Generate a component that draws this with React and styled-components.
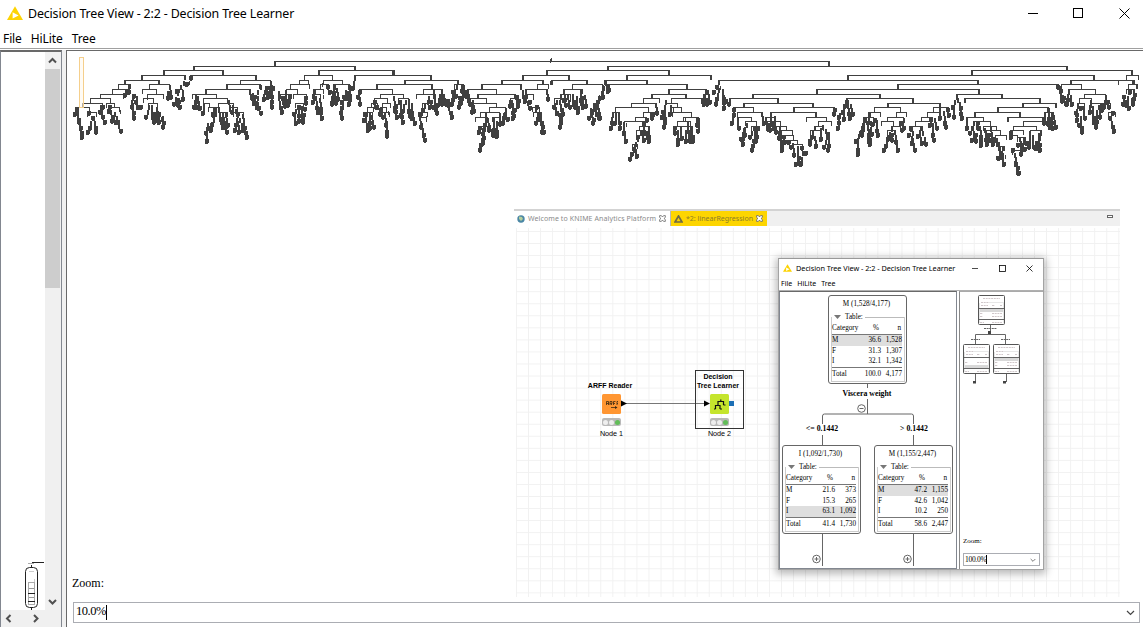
import React from "react";
import styled, { createGlobalStyle } from "styled-components";

const Global = createGlobalStyle`
  html, body { margin: 0; padding: 0; background: #fff; overflow: hidden; }
  * { box-sizing: border-box; }
`;
const SANS = `"Noto Sans", "Open Sans", sans-serif`;
const SERIF = `"Liberation Serif", serif`;
const INK = "#404040";

/* ---------- dense decision tree drawing ---------- */
/* Each section has a left edge; bars are [x1, x2, y], strands are [x1, y1, x2, y2], in thirds of a pixel. */
const sections = [
  {
    left: 60,
    bars: [
      [641, 2308, 34], [398, 885, 49], [309, 489, 62], [244, 376, 76], [390, 588, 76], [191, 298, 91], [541, 631, 91],
      [174, 209, 104], [267, 327, 104], [499, 600, 104], [155, 196, 118], [245, 289, 118], [345, 367, 118], [435, 569, 118],
      [121, 190, 132], [262, 309, 132], [395, 467, 132], [91, 150, 146], [430, 502, 146], [250, 280, 146], [66, 127, 160],
      [137, 162, 160], [428, 446, 160], [475, 518, 160], [265, 292, 160], [46, 87, 173], [148, 176, 173], [445, 476, 173], [507, 530, 173],
      [40, 54, 187], [80, 108, 187], [276, 300, 187], [452, 468, 187], [476, 500, 187], [520, 548, 187],
      [774, 1002, 62], [731, 816, 76], [717, 745, 91], [788, 846, 91], [690, 748, 104], [781, 804, 104], [677, 712, 118], [760, 790, 118],
      [660, 692, 132], [700, 738, 132], [757, 780, 132], [705, 728, 160],
    ],
    strands: [
      [47, 176, 41, 198], [49, 185, 54, 225], [56, 205, 64, 268], [66, 160, 66, 168], [85, 185, 95, 215], [95, 200, 82, 255], [100, 200, 106, 255],
      [120, 165, 131, 225], [127, 165, 116, 195], [148, 165, 143, 190], [150, 180, 165, 225], [165, 210, 180, 252], [163, 187, 170, 225], [180, 182, 185, 195], [155, 195, 152, 222],
      [205, 106, 193, 142], [203, 120, 218, 145], [216, 138, 212, 180], [215, 160, 219, 210], [224, 150, 240, 182], [228, 140, 230, 180],
      [245, 120, 247, 130], [262, 140, 250, 160], [265, 165, 255, 212], [272, 165, 278, 225], [288, 172, 293, 225], [295, 190, 310, 225], [305, 200, 305, 240], [283, 190, 285, 220],
      [327, 106, 330, 150], [323, 125, 320, 155], [376, 80, 378, 95], [370, 95, 350, 130], [350, 125, 340, 172], [367, 120, 365, 155], [355, 150, 357, 183], [350, 145, 350, 175], [390, 80, 379, 112], [386, 95, 392, 100],
      [405, 135, 398, 180], [410, 140, 418, 182], [404, 150, 407, 182], [429, 160, 427, 198], [462, 175, 458, 205], [460, 205, 446, 240], [442, 220, 436, 255], [439, 240, 439, 283], [452, 220, 449, 250],
      [475, 175, 487, 240], [487, 190, 498, 252], [495, 190, 500, 235], [503, 150, 512, 195], [517, 165, 530, 200], [530, 190, 522, 248], [538, 205, 545, 250], [545, 192, 558, 268], [532, 215, 535, 252],
      [567, 120, 575, 155], [600, 106, 582, 150], [577, 130, 600, 196], [590, 140, 588, 180], [574, 140, 578, 170], [612, 120, 608, 155], [629, 95, 620, 150], [618, 110, 622, 140], [632, 105, 632, 180], [640, 110, 665, 155], [654, 140, 662, 195], [674, 122, 680, 172], [688, 135, 685, 165], [670, 150, 672, 175], [643, 110, 645, 125],
      [735, 140, 735, 165], [710, 165, 700, 200], [702, 190, 704, 225], [716, 165, 714, 222], [722, 170, 726, 225], [732, 172, 728, 205],
      [763, 120, 755, 165], [765, 140, 770, 195], [778, 145, 782, 212], [786, 100, 790, 110], [790, 135, 800, 145], [800, 106, 806, 135], [820, 110, 812, 170], [828, 115, 832, 155], [822, 140, 826, 168],
    ],
  },
  {
    left: 330,
    bars: [
      [647, 1017, 62], [72, 304, 76], [575, 718, 76], [221, 385, 91], [512, 640, 91], [662, 771, 91], [10, 58, 104], [137, 307, 104], [372, 400, 104],
      [452, 573, 104], [622, 655, 104], [727, 816, 104], [88, 186, 118], [279, 336, 118], [410, 497, 118], [585, 650, 118], [700, 756, 118],
      [150, 219, 132], [258, 310, 132], [440, 556, 132], [590, 610, 132], [690, 720, 132], [132, 172, 146], [204, 234, 146], [416, 467, 146], [540, 564, 146], [672, 695, 146],
      [122, 142, 160], [155, 181, 160], [424, 498, 160], [275, 300, 160], [110, 129, 173], [151, 168, 173], [478, 525, 173], [100, 125, 187], [157, 178, 187], [263, 291, 187], [450, 506, 187],
      [435, 470, 201], [485, 510, 201], [270, 288, 201], [445, 470, 228], [605, 628, 173], [610, 632, 187],
    ],
    strands: [
      [664, 25, 664, 33], [661, 28, 661, 34], [187, 64, 187, 72], [647, 64, 647, 72],
      [36, 92, 36, 102], [12, 106, 3, 170], [8, 110, 18, 155], [53, 106, 33, 165], [38, 140, 29, 200], [33, 175, 33, 212], [57, 106, 55, 170], [48, 125, 47, 150], [72, 80, 66, 125], [72, 95, 72, 112],
      [88, 120, 81, 150], [85, 130, 86, 170], [132, 150, 135, 182], [142, 165, 155, 210], [150, 175, 147, 200], [104, 190, 98, 220], [104, 205, 112, 252], [122, 195, 128, 240], [116, 190, 118, 240], [162, 190, 165, 235], [168, 215, 168, 265], [175, 185, 182, 205],
      [188, 140, 198, 210], [204, 150, 192, 190], [210, 150, 215, 225], [224, 150, 210, 205], [234, 148, 236, 208], [242, 160, 242, 210], [245, 190, 252, 225], [258, 134, 258, 142], [290, 150, 270, 200], [300, 150, 298, 180], [293, 140, 308, 180], [268, 200, 270, 240], [274, 220, 283, 280], [288, 200, 278, 220],
      [310, 120, 318, 198], [326, 132, 322, 175], [333, 120, 332, 170], [340, 132, 345, 170], [352, 148, 352, 170], [350, 155, 363, 210], [377, 106, 362, 170], [366, 120, 375, 145], [395, 106, 393, 130], [400, 115, 384, 180], [404, 120, 404, 145], [388, 140, 390, 170],
      [410, 120, 418, 170], [427, 150, 424, 195], [427, 165, 430, 190], [435, 203, 437, 222], [465, 190, 462, 235], [470, 205, 475, 250], [460, 235, 456, 260], [446, 230, 444, 252], [456, 250, 447, 308], [458, 260, 457, 290], [490, 205, 487, 265], [497, 215, 498, 265], [478, 225, 488, 262], [506, 190, 508, 230], [525, 175, 515, 225], [522, 190, 530, 215],
      [540, 150, 536, 175], [545, 160, 545, 210], [564, 148, 562, 175], [552, 175, 550, 208], [558, 135, 560, 165], [571, 106, 580, 150], [586, 122, 583, 160], [582, 140, 597, 182], [597, 150, 618, 180], [608, 140, 606, 160], [615, 175, 626, 215], [622, 190, 616, 225], [628, 190, 638, 252], [633, 215, 634, 252],
      [640, 92, 640, 102], [648, 120, 652, 155], [660, 93, 660, 112], [690, 135, 668, 180], [672, 160, 678, 195], [688, 150, 695, 200], [695, 185, 688, 240], [686, 190, 690, 220], [700, 120, 705, 172], [712, 135, 716, 180], [725, 132, 728, 170], [737, 140, 742, 195], [750, 122, 752, 170], [762, 135, 765, 175], [732, 150, 733, 182], [720, 145, 720, 165], [755, 140, 756, 178],
      [816, 106, 816, 150], [825, 93, 832, 130], [806, 140, 792, 175], [795, 160, 775, 210], [780, 175, 788, 222], [800, 165, 805, 210],
    ],
  },
  {
    left: 590,
    bars: [
      [50, 1432, 49], [107, 364, 76], [771, 1513, 76], [43, 172, 91], [383, 1163, 91], [50, 290, 104], [233, 349, 118], [678, 1167, 118], [182, 288, 132], [487, 869, 132],
      [340, 358, 132], [160, 206, 146], [242, 333, 146], [417, 564, 146], [767, 970, 146], [123, 195, 160], [225, 262, 160], [458, 669, 160], [76, 174, 173], [240, 274, 173], [430, 489, 173], [609, 731, 173],
      [160, 192, 187], [247, 303, 187], [440, 513, 187], [540, 679, 187], [134, 168, 201], [280, 325, 201], [442, 482, 201], [525, 556, 201], [648, 707, 201], [103, 164, 214], [262, 300, 214], [465, 498, 214], [685, 722, 214], [530, 570, 214],
      [148, 178, 228], [250, 300, 228], [483, 506, 228], [558, 588, 228], [672, 700, 228], [570, 605, 242], [660, 690, 242], [138, 165, 242], [580, 610, 256], [595, 622, 270], [605, 635, 283], [125, 142, 283], [65, 88, 187],
    ],
    strands: [
      [50, 104, 53, 128], [40, 110, 20, 165], [28, 135, 30, 150], [18, 150, 3, 190], [10, 160, 24, 212], [3, 190, 6, 225], [25, 175, 27, 210], [66, 190, 60, 240], [76, 190, 72, 225], [84, 190, 87, 240], [100, 218, 98, 255], [108, 220, 112, 240], [100, 240, 106, 280],
      [195, 160, 198, 195], [184, 187, 184, 210], [168, 205, 160, 230], [160, 230, 142, 270], [140, 262, 122, 320], [132, 285, 138, 325], [128, 295, 116, 335], [156, 240, 158, 278], [175, 230, 174, 280], [165, 245, 170, 275],
      [225, 150, 212, 210], [240, 165, 238, 200], [222, 175, 220, 240], [248, 175, 250, 195], [285, 205, 285, 225], [253, 230, 252, 255], [260, 240, 262, 290], [270, 232, 272, 272], [290, 215, 298, 280], [285, 240, 286, 280], [303, 230, 306, 280], [322, 205, 318, 235], [325, 210, 321, 252], [298, 250, 299, 280],
      [344, 120, 338, 170], [352, 120, 356, 165], [333, 150, 340, 170], [346, 145, 348, 170], [364, 78, 364, 86], [383, 92, 384, 104], [379, 105, 368, 135], [383, 115, 374, 170], [390, 110, 392, 130], [395, 118, 400, 180], [400, 135, 414, 170], [375, 120, 382, 140],
      [430, 175, 430, 205], [428, 190, 424, 225], [440, 205, 444, 240], [467, 220, 458, 260], [458, 235, 456, 290], [462, 250, 450, 275], [490, 230, 478, 270], [495, 230, 484, 308], [500, 230, 496, 280], [513, 188, 520, 225], [525, 205, 530, 245], [540, 190, 537, 250], [545, 215, 556, 255], [551, 200, 550, 245],
      [567, 230, 563, 275], [570, 245, 573, 308], [580, 255, 582, 285], [595, 270, 600, 300], [605, 280, 610, 325], [620, 290, 624, 350], [632, 290, 644, 320], [635, 305, 630, 352], [625, 320, 616, 352],
      [671, 230, 657, 280], [662, 255, 658, 290], [672, 260, 676, 295], [695, 225, 712, 260], [690, 235, 690, 275], [708, 255, 700, 300], [714, 260, 712, 308], [722, 215, 722, 228], [648, 203, 648, 212], [679, 188, 679, 200],
      [731, 175, 728, 200], [767, 150, 762, 175], [760, 165, 745, 210], [748, 190, 740, 240], [758, 180, 760, 215], [770, 162, 778, 210], [780, 162, 786, 200],
      [825, 205, 810, 255], [810, 240, 795, 280], [800, 265, 800, 322], [832, 230, 835, 285],
    ],
  },
  {
    left: 860,
    bars: [
      [332, 817, 62], [798, 834, 76], [631, 818, 91], [112, 595, 104], [602, 662, 104], [805, 832, 104], [623, 706, 118], [797, 820, 118], [287, 427, 132], [672, 736, 132], [312, 540, 146], [658, 692, 146],
      [80, 239, 160], [487, 589, 160], [650, 672, 160], [692, 720, 160], [725, 750, 160], [42, 121, 173], [220, 265, 173], [411, 565, 173], [25, 60, 187], [107, 137, 187], [202, 240, 187], [342, 480, 187], [553, 578, 187],
      [82, 130, 201], [183, 215, 201], [319, 368, 201], [440, 550, 201], [745, 765, 187], [10, 40, 201], [63, 100, 214], [165, 210, 214], [340, 390, 214], [490, 575, 214], [147, 185, 228], [92, 120, 228], [368, 408, 228], [458, 527, 228],
      [80, 105, 242], [378, 420, 242], [450, 490, 242], [510, 542, 242], [405, 437, 256], [447, 470, 256], [470, 496, 262], [415, 425, 290], [455, 482, 300],
    ],
    strands: [
      [351, 92, 351, 100], [112, 106, 112, 114], [60, 134, 60, 142], [28, 190, 20, 225], [8, 205, 3, 265], [42, 205, 37, 230], [22, 225, 28, 290], [48, 210, 50, 265], [30, 215, 32, 262], [62, 216, 62, 222],
      [92, 232, 80, 275], [82, 255, 70, 308], [93, 250, 92, 280], [102, 240, 105, 285], [104, 270, 110, 308], [128, 205, 124, 250], [120, 215, 128, 240],
      [150, 232, 145, 265], [155, 245, 152, 290], [155, 265, 163, 308], [180, 230, 172, 265], [187, 245, 196, 292], [178, 250, 182, 285], [211, 205, 208, 235], [215, 220, 218, 280], [223, 205, 228, 240], [238, 175, 237, 210], [240, 162, 240, 175], [250, 185, 254, 240], [260, 175, 265, 205],
      [287, 135, 277, 180], [278, 165, 280, 212], [292, 145, 300, 180], [298, 160, 302, 212], [285, 150, 290, 170], [312, 148, 312, 156], [319, 205, 318, 240], [340, 215, 328, 260], [335, 230, 346, 282], [345, 250, 334, 280], [358, 230, 360, 292], [372, 235, 378, 292], [350, 215, 352, 240], [390, 232, 397, 290], [385, 250, 386, 280], [405, 265, 412, 290], [418, 290, 415, 335], [428, 290, 420, 330], [425, 310, 428, 352], [435, 315, 436, 325], [408, 320, 412, 335],
      [440, 203, 440, 212], [450, 245, 450, 268], [478, 262, 482, 300], [490, 265, 480, 320], [470, 280, 456, 310], [462, 310, 465, 350], [463, 335, 473, 378], [470, 350, 472, 376], [496, 275, 492, 308], [508, 245, 503, 300], [515, 255, 518, 300], [540, 245, 528, 305], [535, 250, 536, 308], [527, 275, 522, 300],
      [553, 190, 548, 225], [565, 175, 562, 230], [572, 190, 575, 240], [580, 195, 584, 240], [563, 210, 568, 240], [589, 160, 589, 168], [592, 106, 600, 130], [600, 110, 604, 160], [623, 120, 618, 168], [630, 135, 632, 170], [610, 140, 615, 165], [662, 106, 662, 114],
      [650, 162, 648, 220], [660, 170, 646, 195], [668, 170, 672, 215], [660, 200, 663, 255], [655, 220, 662, 250], [690, 150, 686, 195], [695, 170, 700, 225], [708, 180, 706, 240], [715, 165, 718, 210], [705, 122, 705, 130], [735, 135, 730, 180], [740, 150, 745, 180], [722, 160, 724, 190], [755, 185, 748, 210], [750, 200, 760, 252], [765, 188, 768, 198],
      [798, 77, 798, 88], [834, 78, 834, 86], [773, 94, 773, 100], [806, 120, 790, 150], [790, 135, 785, 170], [800, 140, 803, 182], [822, 92, 824, 105], [820, 118, 815, 170], [828, 106, 830, 114], [796, 150, 795, 172], [822, 130, 820, 155],
    ],
  },
];

function buildTree() {
  let lines = "";
  let pods = "";
  let arms = "";
  sections.forEach(({ left, bars, strands }) => {
    const px = (v) => Math.round(left + v / 3);
    const py = (v) => Math.round(50 + (v - 1) / 3);
    bars.forEach(([a, b, y]) => {
      lines += `M${px(a) + 0.5} ${py(y) + 5}V${py(y) + 0.5}H${px(b) + 0.5}V${py(y) + 5}`;
      if (b - a >= 100) arms += `M${px(a)} ${py(y) + 1}h2v4h-2zM${px(b) - 1} ${py(y) + 1}h2v4h-2z`;
    });
    strands.forEach(([x1, y1, x2, y2], n) => {
      const steps = Math.max(1, Math.round((y2 - y1) / 13.7));
      for (let i = 0; i < steps; i++) {
        const t = steps === 1 ? 0 : i / (steps - 1);
        const x = px(x1 + (x2 - x1) * t);
        const y = py(y1 + ((y2 - y1) * i) / steps);
        if (steps === 1) {
          arms += `M${x} ${y}h1v4h-1z`;
        } else if (i < steps * 0.4 && steps > 2) {
          arms += `M${x} ${y}h2v5h-2z`;
        } else {
          pods += `M${x - 1} ${y}h4v4h-4z`;
          pods += (i + n) % 2 ? `M${x} ${y + 4}h2v1h-2z` : `M${x - 1} ${y + 4}h3v1h-3z`;
        }
      }
    });
  });
  return { lines, pods, arms };
}
const treePaths = buildTree();

/* ---------- outer window ---------- */
const Window = styled.div`
  width: 1143px; height: 627px; display: flex; flex-direction: column; background: #fff; color: #000;
  font-family: ${SANS}; overflow: hidden;
`;
const TitleBar = styled.header`
  display: flex; align-items: center; flex: none; height: ${(p) => (p.$small ? 18 : 27)}px;
  padding: ${(p) => (p.$small ? "0 10px 0 4px" : "0 13px 0 7px")};
`;
const Title = styled.span`
  flex: 1; white-space: nowrap; font-size: ${(p) => (p.$small ? 7.3 : 12.4)}px;
  margin-left: ${(p) => (p.$small ? 4 : 5)}px; letter-spacing: ${(p) => p.$ls || 0}px;
`;
const MenuBar = styled.nav`
  display: flex; flex: none; align-items: center; white-space: nowrap;
  height: ${(p) => (p.$small ? 13 : 21)}px; gap: ${(p) => (p.$small ? 5 : 9)}px;
  padding-left: ${(p) => (p.$small ? 2 : 3)}px; font-size: ${(p) => (p.$small ? 7 : 12)}px;
  padding-top: ${(p) => (p.$small ? 0 : 2)}px; letter-spacing: ${(p) => (p.$small ? 0 : -0.1)}px;
`;
const Body = styled.div`
  flex: 1; min-height: 0; display: flex; border-top: 1px solid #a0a0a0; padding-top: 1px;
`;
const Overview = styled.aside`
  width: 62px; flex: none; display: grid; grid-template: 1fr 17px / 44px 16px;
  border: 1px solid #828790; border-top: 2px solid #696969; border-bottom: 0; background: #fff;
`;
const Splitter = styled.div` width: 4px; flex: none; background: #f0f0f0; `;
const ScrollY = styled.div`
  background: #f0f0f0; display: flex; flex-direction: column; align-items: center;
`;
const Thumb = styled.div` width: 15px; height: 219px; background: #cdcdcd; margin-right: 1px; `;
const Arrow = styled.span` display: grid; place-items: center; width: 15px; height: 17px; margin-right: 1px; `;
const Grow = styled.div` flex: 1; `;
const ScrollX = styled.div`
  grid-column: 1 / 3; background: #f0f0f0; display: flex; justify-content: space-between; padding-right: 17px;
`;
const OverviewCanvas = styled.div` display: flex; align-items: flex-end; justify-content: flex-end; `;
const Main = styled.main`
  flex: 1; min-width: 0; position: relative; border-left: 1px solid #696969; border-top: 1px solid #696969;
  display: flex; flex-direction: column; font-family: ${SERIF};
`;
const TreeArea = styled.div` flex: 1; min-height: 0; svg { display: block; } `;
const ZoomLabel = styled.label`
  font-family: ${SERIF}; font-size: ${(p) => (p.$small ? 7 : 12)}px;
  padding-left: ${(p) => (p.$small ? 3 : 5)}px; line-height: ${(p) => (p.$small ? 10 : 14)}px;
`;
const Combo = styled.div`
  display: flex; align-items: center; justify-content: space-between; border: 1px solid #abadb3; background: #fff;
  height: ${(p) => (p.$small ? 13 : 21)}px; margin: ${(p) => (p.$small ? "7px 3px 3px 3px" : "12px 3px 4px 6px")};
  padding: ${(p) => (p.$small ? "0 3px 0 1px" : "0 4px 1px 2px")};
  font-size: ${(p) => (p.$small ? 7.5 : 12.5)}px; font-family: ${SERIF};
`;
const Value = styled.span`
  border-right: 1px solid #000; line-height: ${(p) => (p.$small ? 9 : 13)}px; letter-spacing: ${(p) => (p.$small ? -0.3 : -0.45)}px;
  padding-bottom: ${(p) => (p.$small ? 0 : 2)}px;
`;

const Chevron = ({ dir = "down", s = 9, c = "#505050", w = 2 }) => {
  const d = { down: "M1 3l3.5 3.5L8 3", up: "M1 6.5L4.5 3 8 6.5", left: "M6.5 1L3 4.5 6.5 8", right: "M3 1l3.5 3.5L3 8" }[dir];
  return <svg width={s} height={s} viewBox="0 0 9 9"><path d={d} fill="none" stroke={c} strokeWidth={w} /></svg>;
};
const Logo = ({ s = 16 }) => (
  <svg width={s} height={s * 0.9} viewBox="0 0 16 14.4">
    <path d="M8 0.3L16 14H0z" fill="#fdd303" />
    <path d="M5.6 6.2v6.4l6-3.2z" fill="#fff" />
  </svg>
);
const Controls = styled.div` display: flex; align-items: center; gap: ${(p) => (p.$small ? 20 : 35)}px; `;
const WindowControls = ({ small }) => {
  const k = small ? 7 : 11;
  return (
    <Controls $small={small}>
      <svg width={k} height={k}><path d={`M${small ? 0 : 1} ${Math.floor(k / 2) + 0.5}h${small ? 6 : 10}`} stroke="#000" strokeWidth={small ? 0.7 : 1} /></svg>
      <svg width={k} height={k}><rect x=".5" y=".5" width={k - (small ? 1 : 2)} height={k - (small ? 1 : 2)} fill="none" stroke="#000" strokeWidth={small ? 0.8 : 1} /></svg>
      <svg width={k} height={k}><path d={`M.5 .5L${k - 0.5} ${k - 0.5}M${k - 0.5} .5L.5 ${k - 0.5}`} stroke="#000" strokeWidth={small ? 0.8 : 1} /></svg>
    </Controls>
  );
};

/* ---------- workflow editor ---------- */
const Editor = styled.section`
  position: absolute; left: 447px; top: 158px; width: 606px; height: 388px; display: flex; flex-direction: column;
`;
const TabStrip = styled.div`
  height: 17px; flex: none; display: flex; align-items: stretch; background: #f0f0f0; border-top: 2px solid #d3d3d3;
  font: 7px ${SANS};
`;
const Tab = styled.div`
  display: flex; align-items: center; gap: 3px; padding: 0 4px 0 3px; white-space: nowrap; color: ${(p) => (p.$active ? "#8c7d2a" : "#8a8a8a")};
  background: ${(p) => (p.$active ? "#fdd500" : "#fff")}; width: ${(p) => p.$w}px;
  border-right: ${(p) => (p.$active ? "0" : "1px solid #b8b8b8")};
  span { flex: 1; letter-spacing: ${(p) => p.$ls}px; }
`;
const MinBtn = styled.i` width: 6px; height: 3px; border: 1px solid #666; margin: 4px 7px 0 auto; background: #fff; `;
const Canvas = styled.div`
  flex: 1; position: relative; margin: 2px 0 0 2px; background-color: #fff;
  background-image: linear-gradient(#f1f1f1 1px, transparent 1px), linear-gradient(90deg, #f1f1f1 1px, transparent 1px);
  background-size: 12.05px 12.05px; background-position: 0 3px;
`;
const FlowNode = styled.div`
  position: absolute; left: ${(p) => p.$x}px; top: ${(p) => p.$y}px; width: 49px; height: 59px;
  border: 1px solid ${(p) => (p.$selected ? "#333" : "transparent")};
  display: flex; flex-direction: column; align-items: center; justify-content: flex-start;
  font: 7px/8px "Liberation Sans", sans-serif; text-align: center; white-space: nowrap;
`;
const NodeName = styled.b`
  display: flex; align-items: flex-end; justify-content: center; flex: none; height: 19px; line-height: 9px;
  margin-bottom: 4px; font-size: 7px; transform: translateX(-1.5px);
`;
const NodeIcon = styled.div`
  width: 19px; height: 20px; flex: none; border-radius: 1.5px; background: ${(p) => p.$c}; display: grid; place-items: center;
`;
const Lights = styled.div`
  width: 19px; height: 8px; flex: none; margin-top: 4px; border-radius: 2px; background: #b9b9b9; display: flex; gap: 1px; align-items: center; justify-content: center;
  i { width: 5px; height: 5px; border-radius: 50%; background: #eee; }
  i:last-child { background: #61bd58; }
`;
const Caption = styled.span` font-size: 7.2px; line-height: 8px; margin-top: 4px; `;
const Wire = styled.svg` position: absolute; left: 0; top: 0; `;
const Close = () => (
  <svg width="7" height="7" viewBox="0 0 7 7"><path d="M.6.6h1.8L3.5 2 4.6.6h1.8v1.8L5 3.5l1.4 1.1v1.8H4.6L3.5 5 2.4 6.4H.6V4.6L2 3.5.6 2.4z" fill="#fff" stroke="#555" strokeWidth=".7" /></svg>
);

/* ---------- small dialog ---------- */
const Dialog = styled.section`
  position: absolute; left: 711px; top: 207px; width: 266px; height: 312px; background: #fff; display: flex; flex-direction: column;
  border: 1px solid #a3a3a3; border-top-color: #999; box-shadow: 0 2px 8px 2px rgba(0, 0, 0, 0.28); font-family: ${SANS};
`;
const DialogBody = styled.div` flex: 1; display: flex; min-height: 0; border-top: 1px solid #b0b0b0; `;
const Sheet = styled.div`
  width: 178px; flex: none; position: relative; border: 1px solid #828790; border-top-color: #696969;
`;
const Side = styled.div`
  flex: 1; border-left: 1px solid #888; border-top: 1px solid #aaa; margin-left: 2px; display: flex; flex-direction: column;
`;
const Lines = styled.svg` position: absolute; left: 0; top: 0; `;
const Card = styled.article`
  position: absolute; left: ${(p) => p.$x}px; top: ${(p) => p.$y}px; width: 79px; height: 89px; border: 1px solid #666; border-radius: 3px; background: #fff;
  font: 7.2px/10px ${SERIF}; padding: 3px 1px 1px 2px; display: flex; flex-direction: column;
`;
const CardTitle = styled.div` text-align: center; height: 13px; padding-right: 3px; `;
const Legend = styled.div`
  display: flex; align-items: center; gap: 2px; height: 10px;
  &::before { content: ""; width: 1px; height: 1px; background: #bbb; }
  &::after { content: ""; flex: 1; height: 1px; background: #bbb; }
  svg { display: block; margin-right: 2px; }
`;
const Table = styled.div` flex: 1; border: 1px solid #ccc; border-top: 0; padding: 4px 2px 0 0; margin-top: -5px; `;
const Row = styled.div`
  display: grid; grid-template-columns: 1fr 20px 21px; height: ${(p) => p.$h || 10.5}px; line-height: ${(p) => p.$h || 10.5}px;
  background: ${(p) => (p.$hot ? "#dedede" : "transparent")};
  border-top: ${(p) => (p.$rule ? "1px solid #777" : "0")};
  border-bottom: ${(p) => (p.$head ? "1px solid #777" : "0")};
  span { text-align: right; white-space: nowrap; }
  span:first-child { text-align: left; }
  span:nth-child(2) { padding-right: ${(p) => (p.$head ? 2 : 0)}px; }
  span:last-child { padding-right: ${(p) => (p.$head ? 1 : 0)}px; }
`;
const Split = styled.b`
  position: absolute; left: ${(p) => p.$x}px; top: ${(p) => p.$y}px; width: 60px; text-align: center; font: bold 7.8px/10px ${SERIF};
`;

const cards = [
  { x: 48, y: 3, title: "M (1,528/4,177)", hot: 0, rows: [["M", "36.6", "1,528"], ["F", "31.3", "1,307"], ["I", "32.1", "1,342"]], total: ["100.0", "4,177"] },
  { x: 2, y: 153, title: "I (1,092/1,730)", hot: 2, rows: [["M", "21.6", "373"], ["F", "15.3", "265"], ["I", "63.1", "1,092"]], total: ["41.4", "1,730"] },
  { x: 94, y: 153, title: "M (1,155/2,447)", hot: 0, rows: [["M", "47.2", "1,155"], ["F", "42.6", "1,042"], ["I", "10.2", "250"]], total: ["58.6", "2,447"] },
];
const NodeCard = ({ x, y, title, hot, rows, total }) => (
  <Card $x={x} $y={y}>
    <CardTitle>{title}</CardTitle>
    <Legend><svg width="7" height="4"><path d="M0 0h7L3.500 4z" fill="#777" /></svg>Table:</Legend>
    <Table>
      <Row $h={14} $head><span>Category</span><span>%</span><span>n</span></Row>
      {rows.map((r, i) => <Row key={r[0]} $hot={i === hot}>{r.map((v) => <span key={v}>{v}</span>)}</Row>)}
      <Row $h={13} $rule><span>Total</span><span>{total[0]}</span><span>{total[1]}</span></Row>
    </Table>
  </Card>
);
const MiniCard = ({ x, y, hot }) => (
  <g transform={`translate(${x} ${y})`}>
    <rect x=".5" y=".5" width="26" height="29" rx="1" fill="#fff" stroke="#555" />
    <path d="M5 3.500h17M3 7.500h7M3 10.500h7M14 10.500h3M22 10.500h2M2 18.500h3M14 18.500h10M2 21.500h3M14 21.500h10M2 27.500h4M14 27.500h10" stroke="#c4b9bd" strokeDasharray="2 .7" strokeWidth=".8" />
    <rect x="2" y={14 + hot * 3.5} width="23" height="3" fill="#d8d8d8" />
    <path d="M10 7.500h15.500v21M1.500 8v20" stroke="#ddd" fill="none" strokeWidth=".7" />
    <path d="M1 13.500h25M1 24.500h25" stroke="#666" />
  </g>
);

export default function App() {
  return (
    <Window>
      <Global />
      <TitleBar><Logo /><Title $ls={-0.14}>Decision Tree View - 2:2 - Decision Tree Learner</Title><WindowControls /></TitleBar>
      <MenuBar><span>File</span><span>HiLite</span><span>Tree</span></MenuBar>
      <Body>
        <Overview>
          <OverviewCanvas>
            <svg width="24" height="52" viewBox="21 558 24 52">
              <path d="M32 562.500h12" stroke="#222" /><path d="M28 563.500h6" stroke="#aaa" />
              <rect x="25.500" y="567.500" width="12" height="40" rx="4" fill="#fff" stroke="#222" />
              <path d="M31.500 565v2M31.500 608v2" stroke="#222" />
              <path d="M29 571.500h5M34.500 579v3" stroke="#ccc" />
              <rect x="28.500" y="582.500" width="6" height="22" fill="none" stroke="#aaa" />
              <path d="M28 593.500h7M28 601.500h7" stroke="#222" /><path d="M29 588.500h5M29 597.500h5" stroke="#999" />
            </svg>
          </OverviewCanvas>
          <ScrollY>
            <Arrow><Chevron dir="up" /></Arrow><Thumb /><Grow /><Arrow><Chevron /></Arrow>
          </ScrollY>
          <ScrollX><Arrow><Chevron dir="left" /></Arrow><Arrow><Chevron dir="right" /></Arrow></ScrollX>
        </Overview>
        <Splitter />
        <Main>
          <TreeArea>
            <svg width="1076" height="150" viewBox="67 51 1076 150" shapeRendering="crispEdges">
              <path d={treePaths.lines} fill="none" stroke={INK} />
              <path d={treePaths.arms} fill={INK} />
              <path d={treePaths.pods} fill={INK} />
              <rect x="79.500" y="57.500" width="4" height="50" fill="#fff9ef" fillOpacity=".6" stroke="#f5cf8c" />
            </svg>
          </TreeArea>
          <ZoomLabel>Zoom:</ZoomLabel>
          <Combo><Value>10.0%</Value><Chevron c="#444" w={1.2} /></Combo>

          <Editor>
            <TabStrip>
              <Tab $w={157} $ls={0.11}>
                <svg width="8" height="8"><circle cx="4" cy="4" r="3.700" fill="#4b87a5" /><path d="M2 1.500l3 .5 1 2-2 2-2-2z" fill="#b5cf9c" /></svg>
                <span>Welcome to KNIME Analytics Platform</span><Close />
              </Tab>
              <Tab $active $w={96} $ls={0.02}>
                <svg width="9" height="8"><path d="M4.500 1L8 7H1z" fill="none" stroke="#6f6a45" strokeWidth="1.700" /></svg>
                <span>*2: linearRegression</span><Close />
              </Tab>
              <MinBtn />
            </TabStrip>
            <Canvas>
              <Wire width="240" height="240">
                <path d="M108 175.500h82" stroke="#777" />
                <path d="M105 172.500l6 3-6 3zM188 172.500l6 3-6 3z" />
                <rect x="213" y="173" width="5" height="5" fill="#1c6fb5" />
              </Wire>
              <FlowNode $x={71} $y={142}>
                <NodeName>ARFF Reader</NodeName>
                <NodeIcon $c="#ff9632"><svg width="13" height="11"><path d="M1.500 6V2.500h2V6M1.500 4.500h2M5 6V2.500h2v2H5.500L7 6M8.500 6V2.500h2M8.500 4.500h1.500M12 6V2.500h1M12 4.500h1M6 8.500h5" stroke="#3c2812" strokeWidth=".8" fill="none" /><path d="M10 7l2.500 1.500L10 10z" fill="#3c2812" /></svg></NodeIcon>
                <Lights><i /><i /><i /></Lights><Caption>Node 1</Caption>
              </FlowNode>
              <FlowNode $x={179} $y={142} $selected>
                <NodeName>Decision<br />Tree Learner</NodeName>
                <NodeIcon $c="#c5e52d"><svg width="13" height="13"><path d="M5 6.500V3.500h5.500V7M7.800 3.500V1.500M2.500 11V7.500H7V11M5 7.500V6M1 11h1.500M10.500 7h2M7 11h2" stroke="#111" strokeWidth="1.200" fill="none" /></svg></NodeIcon>
                <Lights><i /><i /><i /></Lights><Caption>Node 2</Caption>
              </FlowNode>
            </Canvas>
          </Editor>

          <Dialog>
            <TitleBar $small><Logo s={9} /><Title $small $ls={-0.03}>Decision Tree View - 2:2 - Decision Tree Learner</Title><WindowControls small /></TitleBar>
            <MenuBar $small><span>File</span><span>HiLite</span><span>Tree</span></MenuBar>
            <DialogBody>
              <Sheet>
                <Lines width="176" height="277" fill="none" stroke="#666">
                  <path d="M87.500 91v5M87.500 107v15M42.500 132v-8q0-2 2-2h87q2 0 2 2v8M42.500 143v131M133.500 143v131" />
                  <circle cx="81.500" cy="116.500" r="3.800" /><path d="M79.500 116.500h4" />
                  <circle cx="36.500" cy="267" r="3.800" /><path d="M34.500 267h4M36.500 265v4" />
                  <circle cx="127.500" cy="267" r="3.800" /><path d="M125.500 267h4M127.500 265v4" />
                </Lines>
                {cards.map((c) => <NodeCard key={c.title} {...c} />)}
                <Split $x={57} $y={97}>Viscera weight</Split>
                <Split $x={12} $y={132}>&lt;= 0.1442</Split>
                <Split $x={104} $y={132}>&gt; 0.1442</Split>
              </Sheet>
              <Side>
                <svg width="80" height="100" viewBox="960 292 80 100">
                  <path d="M990.500 325v9M975.500 345v-10.500h30V345M975.500 373v9M1006.500 373v9" stroke="#666" fill="none" />
                  <path d="M984 328.500h13M971 339.500h9M1001 339.500h9" stroke="#666" strokeDasharray="2 .6" />
                  <rect x="988" y="331" width="3" height="3" fill="#444" /><rect x="973" y="381" width="3" height="2.500" fill="#444" /><rect x="1003" y="381" width="3" height="2.500" fill="#444" />
                  <MiniCard x={978} y={295} hot={0} /><MiniCard x={963} y={344} hot={2} /><MiniCard x={993} y={344} hot={0} />
                </svg>
                <Grow />
                <ZoomLabel $small>Zoom:</ZoomLabel>
                <Combo $small><Value $small>100.0%</Value><Chevron s={6} c="#666" w={1.3} /></Combo>
              </Side>
            </DialogBody>
          </Dialog>
        </Main>
      </Body>
    </Window>
  );
}
